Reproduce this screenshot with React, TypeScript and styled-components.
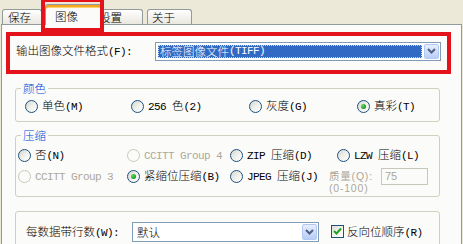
import React from 'react';
import styled, { createGlobalStyle } from 'styled-components';

const GlobalStyle = createGlobalStyle`
  html, body {
    margin: 0;
    padding: 0;
    background: #ece9d8;
  }
  body {
    font-family: 'Noto Sans CJK SC', sans-serif;
    font-size: 11.5px;
    font-weight: 300;
    line-height: 14px;
    color: #000;
  }
`;

const Window = styled.div`
  position: relative;
  width: 463px;
  height: 244px;
  overflow: hidden;
  background: #ece9d8;
  display: flex;
  flex-direction: column;
`;

const TabStrip = styled.div`
  position: relative;
  z-index: 2;
  height: 24px;
  flex-shrink: 0;
  display: flex;
  align-items: flex-end;
  padding-left: 2px;
`;

const Tab = styled.div<{ $w: number; $ml: number; $pl: number; $active?: boolean }>`
  position: relative;
  box-sizing: border-box;
  width: ${(p) => p.$w}px;
  margin-left: ${(p) => p.$ml}px;
  padding-left: ${(p) => p.$pl}px;
  height: ${(p) => (p.$active ? 21 : 15)}px;
  margin-bottom: ${(p) => (p.$active ? -1 : 0)}px;
  z-index: ${(p) => (p.$active ? 2 : 1)};
  border: 1px solid #919b9c;
  border-bottom: none;
  border-radius: 3px 3px 0 0;
  background: ${(p) =>
    p.$active ? '#fbfbf9' : 'linear-gradient(#ffffff 0%, #f4f3ee 50%, #e9e7df 100%)'};
  box-shadow: ${(p) => (p.$active ? 'inset 0 2px 0 #f5a623, inset 0 3px 0 #ffd26b' : 'none')};
  display: flex;
  align-items: ${(p) => (p.$active ? 'flex-start' : 'center')};
  padding-top: ${(p) => (p.$active ? 4 : 0)}px;
  white-space: nowrap;
`;

const Panel = styled.div`
  position: relative;
  z-index: 1;
  flex: 1;
  box-sizing: border-box;
  width: 461px;
  margin-left: 1px;
  border: 1px solid #919b9c;
  border-bottom: none;
  background: #fbfbf9;
  padding-left: 13px;
  display: flex;
  flex-direction: column;
`;

const Latin = styled.span`
  font-family: 'Liberation Mono', monospace;
  font-size: 11px;
  font-weight: 400;
  letter-spacing: -0.6px;
`;

const Mixed = ({ text }: { text: string }) => (
  <>
    {text
      .split(/([\x20-\x7e]+)/)
      .filter(Boolean)
      .map((part, i) =>
        /^[\x20-\x7e]+$/.test(part) ? (
          <Latin key={i}>{part}</Latin>
        ) : (
          <React.Fragment key={i}>{part}</React.Fragment>
        )
      )}
  </>
);

const FormatRow = styled.div`
  margin-top: 16px;
  height: 20px;
  display: flex;
  align-items: center;
`;

const FieldLabel = styled.span<{ $w: number; $ml: number }>`
  width: ${(p) => p.$w}px;
  margin-left: ${(p) => p.$ml}px;
  flex-shrink: 0;
  white-space: nowrap;
`;

const Combo = styled.div<{ $w: number; $h: number }>`
  box-sizing: border-box;
  width: ${(p) => p.$w}px;
  height: ${(p) => p.$h}px;
  border: 1px solid #7f9db9;
  background: #fff;
  display: flex;
  align-items: center;
  padding: 1px;
  gap: 2px;
`;

const Selected = styled.div`
  flex: 1;
  height: 13px;
  margin-left: 1px;
  background: #316ac5;
  color: #fff;
  outline: 1px dotted #c9d8f2;
  outline-offset: -1px;
  display: flex;
  align-items: center;
  padding-left: 2px;
  line-height: 13px;
`;

const ComboValue = styled.div`
  flex: 1;
  padding-left: 3px;
  line-height: 14px;
`;

const DropButton = styled.div`
  box-sizing: border-box;
  width: 15px;
  height: 100%;
  border: 1px solid #b4c8f4;
  border-radius: 2px;
  background: linear-gradient(#e7eefd 0%, #cddcfb 55%, #b8cdf7 100%);
  display: flex;
  align-items: center;
  justify-content: center;
  flex-shrink: 0;
`;

const Chevron = () => (
  <svg width="9" height="6" viewBox="0 0 9 6">
    <path d="M1 1 L4.5 4.5 L8 1" fill="none" stroke="#4d6185" strokeWidth="2" />
  </svg>
);

const Group = styled.div<{ $h: number; $mt: number }>`
  box-sizing: border-box;
  width: 425px;
  height: ${(p) => p.$h}px;
  margin-top: ${(p) => p.$mt}px;
  border: 1px solid #d0d0bf;
  border-radius: 3px;
  display: flex;
  flex-direction: column;
  flex-shrink: 0;
`;

const Legend = styled.div`
  align-self: flex-start;
  margin: -8px 0 0 5px;
  padding: 0 2px;
  background: #fbfbf9;
  color: #0046d5;
  line-height: 14px;
`;

const OptionRow = styled.div<{ $mt: number; $pl: number }>`
  display: flex;
  align-items: flex-start;
  height: 16px;
  margin-top: ${(p) => p.$mt}px;
  padding-left: ${(p) => p.$pl}px;
`;

const Option = styled.div<{ $w?: number; $disabled?: boolean }>`
  ${(p) => (p.$w ? `width: ${p.$w}px;` : '')}
  flex-shrink: 0;
  height: 16px;
  display: flex;
  align-items: center;
  gap: 4px;
  white-space: nowrap;
  color: ${(p) => (p.$disabled ? '#aca899' : '#000')};
`;

const Circle = styled.span<{ $checked?: boolean; $disabled?: boolean }>`
  box-sizing: border-box;
  width: 13px;
  height: 13px;
  border-radius: 50%;
  flex-shrink: 0;
  border: 1px solid ${(p) => (p.$disabled ? '#cac8bb' : '#1c5180')};
  background: ${(p) =>
    p.$disabled ? '#fbfbf9' : 'linear-gradient(135deg, #d6d6cf 0%, #eeeee9 45%, #ffffff 100%)'};
  display: flex;
  align-items: center;
  justify-content: center;

  &::after {
    content: '';
    display: ${(p) => (p.$checked ? 'block' : 'none')};
    width: 5px;
    height: 5px;
    border-radius: 50%;
    background: radial-gradient(circle at 35% 35%, #63dc63, #21a121 60%, #177a17);
  }
`;

const Radio = ({
  label,
  w,
  checked,
  disabled,
}: {
  label: string;
  w?: number;
  checked?: boolean;
  disabled?: boolean;
}) => (
  <Option $w={w} $disabled={disabled}>
    <Circle $checked={checked} $disabled={disabled} />
    <span>
      <Mixed text={label} />
    </span>
  </Option>
);

const Quality = styled.div`
  display: flex;
  align-items: flex-start;
  color: #aca899;
  font-family: 'Liberation Sans', 'Noto Sans CJK SC', sans-serif;
  font-weight: 400;
  font-size: 10.5px;
`;

const QualityText = styled.div`
  display: flex;
  flex-direction: column;
  width: 52px;
  letter-spacing: 0.8px;
`;

const QualityLine = styled.span<{ $first?: boolean }>`
  line-height: ${(p) => (p.$first ? 14 : 11)}px;
  margin-top: ${(p) => (p.$first ? 1 : 0)}px;
  white-space: nowrap;
`;

const SmallInput = styled.div`
  box-sizing: border-box;
  width: 47px;
  height: 17px;
  border: 1px solid #c9c7ba;
  background: #fbfbf9;
  padding-left: 3px;
  line-height: 15px;
  font-size: 11px;
  letter-spacing: 0;
`;

const BottomRow = styled.div`
  display: flex;
  align-items: center;
  height: 19px;
  margin-top: 10px;
  padding-left: 10px;
`;

const CheckOption = styled.div`
  display: flex;
  align-items: center;
  gap: 3px;
  margin-left: 12px;
  white-space: nowrap;
`;

const CheckBox = styled.span`
  box-sizing: border-box;
  width: 13px;
  height: 13px;
  border: 1px solid #1c5180;
  background: linear-gradient(135deg, #dcdcd7 0%, #f2f2ee 50%, #ffffff 100%);
  display: flex;
  align-items: center;
  justify-content: center;
`;

const Highlight = styled.div<{ $x: number; $y: number; $w: number; $h: number }>`
  position: absolute;
  z-index: 5;
  left: ${(p) => p.$x}px;
  top: ${(p) => p.$y}px;
  width: ${(p) => p.$w}px;
  height: ${(p) => p.$h}px;
  box-sizing: border-box;
  border: 4px solid #e3121b;
  pointer-events: none;
`;

const tabs = [
  { label: '保存', w: 40, ml: 0, pl: 5 },
  { label: '图像', w: 57, ml: 3, pl: 9, active: true },
  { label: '设置', w: 48, ml: -7, pl: 3 },
  { label: '关于', w: 45, ml: 4, pl: 4 },
];

export default function App() {
  return (
    <Window>
      <GlobalStyle />
      <TabStrip>
        {tabs.map((t) => (
          <Tab key={t.label} $w={t.w} $ml={t.ml} $pl={t.pl} $active={t.active}>
            {t.label}
          </Tab>
        ))}
      </TabStrip>
      <Panel>
        <FormatRow>
          <FieldLabel $w={139} $ml={1}>
            <Mixed text="输出图像文件格式(F):" />
          </FieldLabel>
          <Combo $w={286} $h={19}>
            <Selected>
              <Mixed text="标签图像文件(TIFF)" />
            </Selected>
            <DropButton>
              <Chevron />
            </DropButton>
          </Combo>
        </FormatRow>

        <Group $h={34} $mt={27}>
          <Legend>颜色</Legend>
          <OptionRow $mt={3} $pl={9}>
            <Radio label="单色(M)" w={106} />
            <Radio label="256 色(2)" w={118} />
            <Radio label="灰度(G)" w={108} />
            <Radio label="真彩(T)" checked />
          </OptionRow>
        </Group>

        <Group $h={62} $mt={13}>
          <Legend>压缩</Legend>
          <OptionRow $mt={5} $pl={2}>
            <Radio label="否(N)" w={109} />
            <Radio label="CCITT Group 4" w={103} disabled />
            <Radio label="ZIP 压缩(D)" w={107} />
            <Radio label="LZW 压缩(L)" />
          </OptionRow>
          <OptionRow $mt={5} $pl={2}>
            <Radio label="CCITT Group 3" w={109} disabled />
            <Radio label="紧缩位压缩(B)" w={103} checked />
            <Radio label="JPEG 压缩(J)" w={99} />
            <Quality>
              <QualityText>
                <QualityLine $first>质量(Q):</QualityLine>
                <QualityLine>(0-100)</QualityLine>
              </QualityText>
              <SmallInput>75</SmallInput>
            </Quality>
          </OptionRow>
        </Group>

        <Group $h={40} $mt={14}>
          <BottomRow>
            <FieldLabel $w={106} $ml={0}>
              <Mixed text="每数据带行数(W):" />
            </FieldLabel>
            <Combo $w={187} $h={20}>
              <ComboValue>默认</ComboValue>
              <DropButton>
                <Chevron />
              </DropButton>
            </Combo>
            <CheckOption>
              <CheckBox>
                <svg width="9" height="9" viewBox="0 0 9 9">
                  <path d="M1 4 L3.5 6.5 L8 1.5" fill="none" stroke="#21a121" strokeWidth="2" />
                </svg>
              </CheckBox>
              <span>
                <Mixed text="反向位顺序(R)" />
              </span>
            </CheckOption>
          </BottomRow>
        </Group>
      </Panel>
      <Highlight $x={41} $y={-2} $w={63} $h={34} />
      <Highlight $x={6} $y={32} $w={445} $h={42} />
    </Window>
  );
}
